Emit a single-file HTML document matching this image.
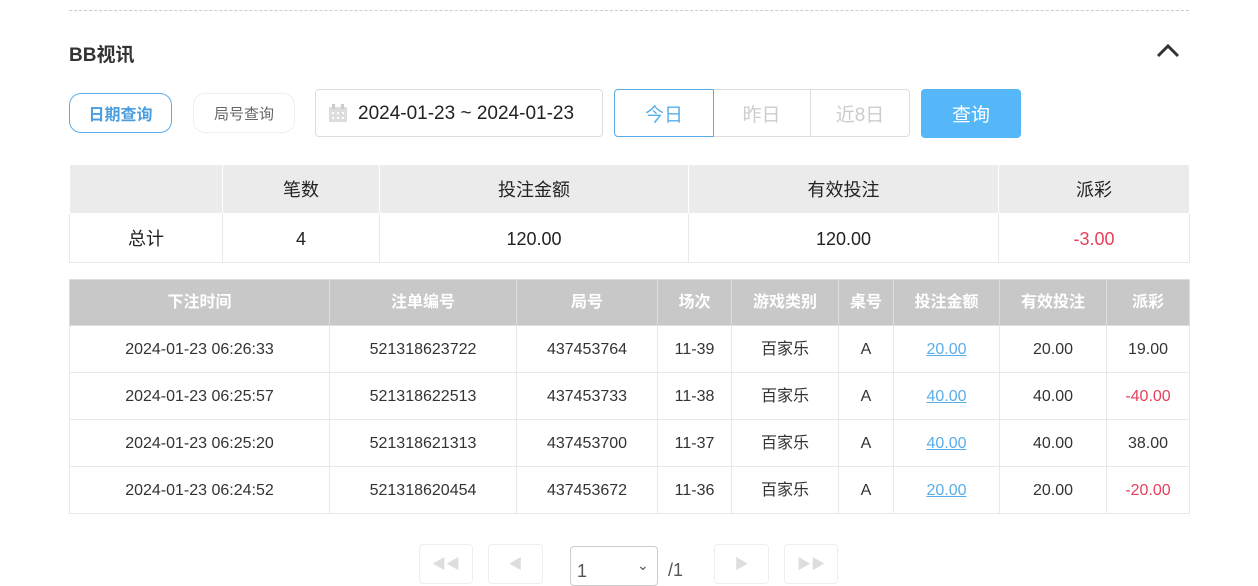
<!DOCTYPE html>
<html><head><meta charset="utf-8"><style>
*{box-sizing:border-box;margin:0;padding:0}
body{width:1258px;height:578px;overflow:hidden;background:#fff;font-family:"Liberation Sans","Noto Sans CJK SC",sans-serif;color:#222;position:relative}
.a{position:absolute}
.c{display:flex;align-items:center;justify-content:center}
table{border-collapse:collapse;position:absolute;table-layout:fixed}
td{text-align:center;border:1px solid #e8e8e8;vertical-align:middle;line-height:20px;padding-top:2px}
.s td{height:49px;font-size:18px;color:#222}
.s tr:first-child td{background:#ebebeb;border-color:#fff}
.d td{height:47px;font-size:16px;color:#333}
.d tr:first-child td{background:#c8c8c8;color:#fff;font-weight:bold;border-color:#ddd;height:46px;font-size:16px;padding-top:0}
td.r{color:#e4405a}
td.l{color:#5aaee8;text-decoration:underline}
.pb{border:1px solid #eee;border-radius:4px;top:544px;height:40px;color:#ddd}
</style></head><body>
<div class="a" style="left:69px;top:10px;width:1120px;border-top:1px dashed #ccc"></div>
<div class="a" style="left:69px;top:40px;font-size:19px;font-weight:bold;color:#333">BB视讯</div>
<svg class="a" style="left:1156px;top:43px" width="24" height="16"><path d="M2 13 L12 3 L22 13" fill="none" stroke="#333" stroke-width="3"/></svg>
<div class="a c" style="left:69px;top:93px;width:103px;height:40px;border:1px solid #5aaee8;border-radius:12px;color:#4a9ee0;font-size:16px;font-weight:bold">日期查询</div>
<div class="a c" style="left:193px;top:93px;width:102px;height:40px;border:1px solid #eee;border-radius:12px;color:#666;font-size:15px">局号查询</div>
<div class="a" style="left:315px;top:89px;width:288px;height:48px;border:1px solid #ddd;border-radius:4px"></div>
<svg class="a" style="left:328px;top:103px" width="20" height="20"><rect x="1" y="4" width="18" height="15" fill="#ddd"/><rect x="4" y="1" width="3" height="5" fill="#ccc"/><rect x="13" y="1" width="3" height="5" fill="#ccc"/><g fill="#fff"><rect x="4" y="9" width="2" height="2"/><rect x="9" y="9" width="2" height="2"/><rect x="14" y="9" width="2" height="2"/><rect x="4" y="14" width="2" height="2"/><rect x="9" y="14" width="2" height="2"/><rect x="14" y="14" width="2" height="2"/></g></svg>
<div class="a" style="left:358px;top:103px;font-size:19px;color:#222">2024-01-23 ~ 2024-01-23</div>
<div class="a" style="left:614px;top:89px;width:296px;height:48px;border:1px solid #ddd;border-radius:4px"></div>
<div class="a c" style="left:614px;top:89px;width:100px;height:48px;border:1px solid #5aaee8;border-radius:4px 0 0 4px;color:#5aaee8;font-size:19px">今日</div>
<div class="a c" style="left:713px;top:89px;width:98px;height:48px;border-right:1px solid #ddd;color:#ccc;font-size:19px">昨日</div>
<div class="a c" style="left:811px;top:89px;width:98px;height:48px;color:#ccc;font-size:19px">近8日</div>
<div class="a c" style="left:921px;top:89px;width:100px;height:49px;background:#55b6f8;border-radius:4px;color:#fff;font-size:19px">查询</div>
<table class="s" style="left:69px;top:164px;width:1120px">
<colgroup><col style="width:153px"><col style="width:157px"><col style="width:309px"><col style="width:310px"><col style="width:191px"></colgroup>
<tr><td></td><td>笔数</td><td>投注金额</td><td>有效投注</td><td>派彩</td></tr>
<tr><td>总计</td><td>4</td><td>120.00</td><td>120.00</td><td class="r">-3.00</td></tr>
</table>
<table class="d" style="left:69px;top:279px;width:1120px">
<colgroup><col style="width:260px"><col style="width:187px"><col style="width:141px"><col style="width:74px"><col style="width:107px"><col style="width:55px"><col style="width:106px"><col style="width:107px"><col style="width:83px"></colgroup>
<tr><td>下注时间</td><td>注单编号</td><td>局号</td><td>场次</td><td>游戏类别</td><td>桌号</td><td>投注金额</td><td>有效投注</td><td>派彩</td></tr>
<tr><td>2024-01-23 06:26:33</td><td>521318623722</td><td>437453764</td><td>11-39</td><td>百家乐</td><td>A</td><td class="l">20.00</td><td>20.00</td><td>19.00</td></tr>
<tr><td>2024-01-23 06:25:57</td><td>521318622513</td><td>437453733</td><td>11-38</td><td>百家乐</td><td>A</td><td class="l">40.00</td><td>40.00</td><td class="r">-40.00</td></tr>
<tr><td>2024-01-23 06:25:20</td><td>521318621313</td><td>437453700</td><td>11-37</td><td>百家乐</td><td>A</td><td class="l">40.00</td><td>40.00</td><td>38.00</td></tr>
<tr><td>2024-01-23 06:24:52</td><td>521318620454</td><td>437453672</td><td>11-36</td><td>百家乐</td><td>A</td><td class="l">20.00</td><td>20.00</td><td class="r">-20.00</td></tr>
</table>
<div class="a pb c" style="left:419px;width:54px;font-size:14px">◀◀</div>
<div class="a pb c" style="left:488px;width:55px;font-size:14px">◀</div>
<div class="a" style="left:570px;top:546px;width:88px;height:40px;border:1px solid #ccc;border-radius:4px;padding:14px 0 0 6px;font-size:18px;color:#555">1<span style="position:absolute;left:66px;top:10px;font-size:14px;color:#555">⌄</span></div>
<div class="a" style="left:668px;top:560px;font-size:18px;color:#555">/1</div>
<div class="a pb c" style="left:714px;width:55px;font-size:14px">▶</div>
<div class="a pb c" style="left:784px;width:54px;font-size:14px">▶▶</div>
</body></html>
